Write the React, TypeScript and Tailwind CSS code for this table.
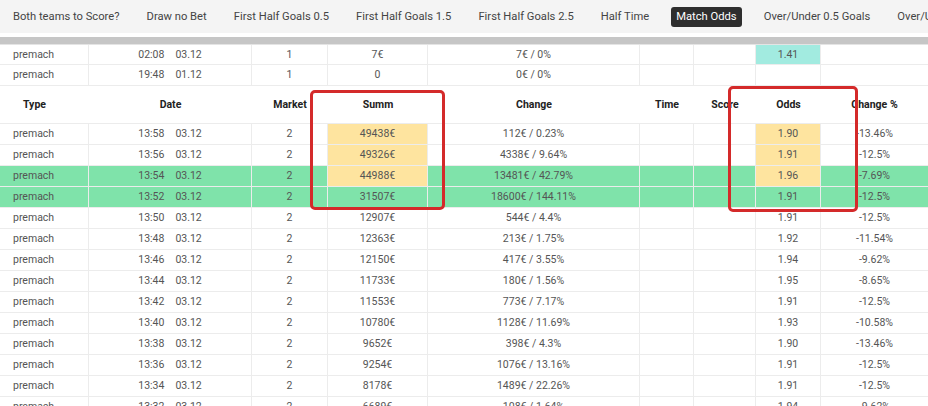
import React from 'react';

const tabs = [
  'Both teams to Score?',
  'Draw no Bet',
  'First Half Goals 0.5',
  'First Half Goals 1.5',
  'First Half Goals 2.5',
  'Half Time',
  'Match Odds',
  'Over/Under 0.5 Goals',
  'Over/Under 1.5 Goals',
];

type Row = {
  time: string;
  date: string;
  market: string;
  summ: string;
  change: string;
  odds: string;
  pct: string;
  green?: boolean;
  hlSumm?: boolean;
  hlOdds?: boolean;
  cyan?: boolean;
};

const topRows: Row[] = [
  { time: '02:08', date: '03.12', market: '1', summ: '7€', change: '7€ / 0%', odds: '1.41', pct: '', cyan: true },
  { time: '19:48', date: '01.12', market: '1', summ: '0', change: '0€ / 0%', odds: '', pct: '' },
];

const rows: Row[] = [
  { time: '13:58', date: '03.12', market: '2', summ: '49438€', change: '112€ / 0.23%', odds: '1.90', pct: '-13.46%', hlSumm: true, hlOdds: true },
  { time: '13:56', date: '03.12', market: '2', summ: '49326€', change: '4338€ / 9.64%', odds: '1.91', pct: '-12.5%', hlSumm: true, hlOdds: true },
  { time: '13:54', date: '03.12', market: '2', summ: '44988€', change: '13481€ / 42.79%', odds: '1.96', pct: '-7.69%', green: true, hlSumm: true, hlOdds: true },
  { time: '13:52', date: '03.12', market: '2', summ: '31507€', change: '18600€ / 144.11%', odds: '1.91', pct: '-12.5%', green: true },
  { time: '13:50', date: '03.12', market: '2', summ: '12907€', change: '544€ / 4.4%', odds: '1.91', pct: '-12.5%' },
  { time: '13:48', date: '03.12', market: '2', summ: '12363€', change: '213€ / 1.75%', odds: '1.92', pct: '-11.54%' },
  { time: '13:46', date: '03.12', market: '2', summ: '12150€', change: '417€ / 3.55%', odds: '1.94', pct: '-9.62%' },
  { time: '13:44', date: '03.12', market: '2', summ: '11733€', change: '180€ / 1.56%', odds: '1.95', pct: '-8.65%' },
  { time: '13:42', date: '03.12', market: '2', summ: '11553€', change: '773€ / 7.17%', odds: '1.91', pct: '-12.5%' },
  { time: '13:40', date: '03.12', market: '2', summ: '10780€', change: '1128€ / 11.69%', odds: '1.93', pct: '-10.58%' },
  { time: '13:38', date: '03.12', market: '2', summ: '9652€', change: '398€ / 4.3%', odds: '1.90', pct: '-13.46%' },
  { time: '13:36', date: '03.12', market: '2', summ: '9254€', change: '1076€ / 13.16%', odds: '1.91', pct: '-12.5%' },
  { time: '13:34', date: '03.12', market: '2', summ: '8178€', change: '1489€ / 22.26%', odds: '1.91', pct: '-12.5%' },
  { time: '13:32', date: '03.12', market: '2', summ: '6689€', change: '108€ / 1.64%', odds: '1.94', pct: '-9.62%' },
];

const grid = 'grid grid-cols-[89px_163px_76px_100px_212px_54px_62px_65px_107px]';
const cell = 'flex items-center justify-center border-r border-[#ececec]';

function DataRow({ r, h = 'h-[21px]' }: { r: Row; h?: string }) {
  return (
    <div className={`${grid} ${h} border-b border-[#ececec] ${r.green ? 'bg-[#7fe3aa]' : ''}`}>
      <div className="flex items-center pl-[13px] border-r border-[#ececec]">premach</div>
      <div className={`${cell} gap-[11px]`}>
        <span>{r.time}</span>
        <span>{r.date}</span>
      </div>
      <div className={cell}>{r.market}</div>
      <div className={`${cell} ${r.hlSumm ? 'bg-[#fee49f]' : ''}`}>{r.summ}</div>
      <div className={cell}>{r.change}</div>
      <div className={cell}></div>
      <div className={cell}></div>
      <div className={`${cell} ${r.hlOdds ? 'bg-[#fee49f]' : ''} ${r.cyan ? 'bg-[#a2ebe0]' : ''}`}>{r.odds}</div>
      <div className="flex items-center justify-center">{r.pct}</div>
    </div>
  );
}

export default function App() {
  return (
    <div className="relative w-[928px] h-[406px] overflow-hidden bg-white font-['Roboto',sans-serif]">
      {/* Tabs */}
      <div className="h-[33px] pt-[1px] bg-[#f4f4f4] flex items-center gap-[27.1px] pl-[13px] whitespace-nowrap text-[11.2px] text-[#444]">
        {tabs.map((t) =>
          t === 'Match Odds' ? (
            <span key={t} className="bg-[#2e2e2e] text-white rounded-[3px] px-[5px] -mx-[5px] py-[2px]">
              {t}
            </span>
          ) : (
            <span key={t}>{t}</span>
          )
        )}
      </div>
      <div className="h-[4px] bg-white" />
      <div className="h-[7px] bg-[#c6c6c6]" />
      <div className="h-[1px] bg-[#e4e4e4]" />

      {/* Table */}
      <div className="text-[10.5px] text-[#555]">
        <DataRow r={topRows[0]} h="h-[20px]" />
        <DataRow r={topRows[1]} />
        <div className={`${grid} h-[38px] border-b border-[#ececec] font-bold text-[#222]`}>
          <div className="flex items-center pl-[23px]">Type</div>
          <div className="flex items-center justify-center">Date</div>
          <div className="flex items-center justify-center">Market</div>
          <div className="flex items-center justify-center">Summ</div>
          <div className="flex items-center justify-center">Change</div>
          <div className="flex items-center justify-center">Time</div>
          <div className="flex items-center justify-center">Score</div>
          <div className="flex items-center justify-center">Odds</div>
          <div className="flex items-center justify-center">Change %</div>
        </div>
        {rows.map((r) => (
          <DataRow key={r.time} r={r} />
        ))}
      </div>

      {/* Highlight boxes */}
      <div className="absolute left-[310px] top-[90px] w-[135px] h-[120px] border-[3px] border-[#d42a2a] rounded-[5px]" />
      <div className="absolute left-[728px] top-[86px] w-[130px] h-[126px] border-[3px] border-[#d42a2a] rounded-[5px]" />
    </div>
  );
}
